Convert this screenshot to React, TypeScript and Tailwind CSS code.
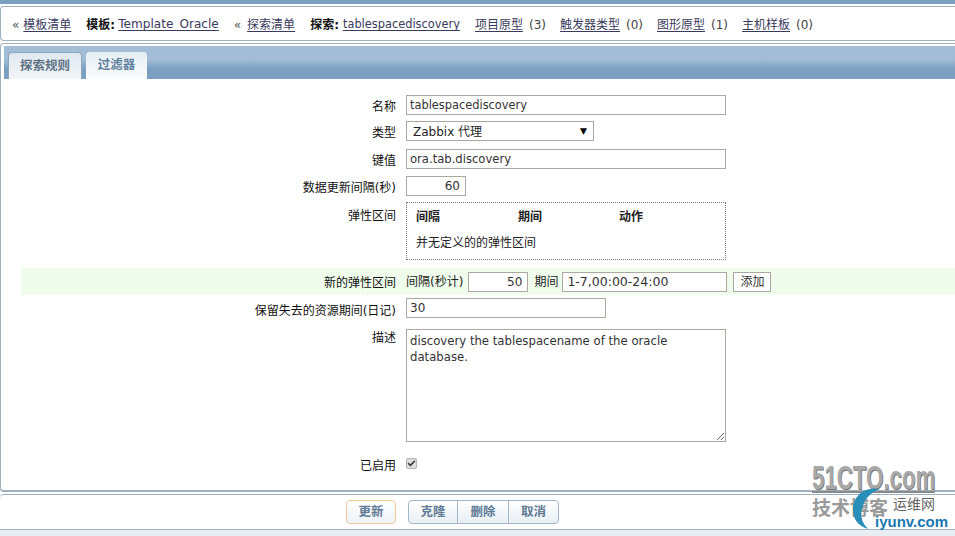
import { Check } from "lucide-react";

const font = "[font-family:'DejaVu_Sans','Noto_Sans_CJK_SC',sans-serif]";
const fieldBorder = "border border-[#aaa89f] bg-white";

function Crumb({ children }: { children: React.ReactNode }) {
  return <a className="text-[#3a3a5c] underline underline-offset-2">{children}</a>;
}

function Count({ children }: { children: React.ReactNode }) {
  return <span className="ml-[6px] text-[#444]">{children}</span>;
}

function Row({
  label,
  className,
  labelClass,
  children,
}: {
  label: string;
  className?: string;
  labelClass?: string;
  children: React.ReactNode;
}) {
  return (
    <div className={"flex " + (className ?? "")}>
      <div className={"w-[395px] shrink-0 text-right text-[12px] leading-[16px] text-[#111] " + (labelClass ?? "")}>
        {label}
      </div>
      <div className="ml-[10px] flex-1">{children}</div>
    </div>
  );
}

export default function App() {
  return (
    <div className={"relative flex h-[536px] w-[955px] flex-col overflow-hidden bg-white text-[12px] " + font}>
      <div className="h-1 bg-[#7a9fc1]" />

      {/* breadcrumb bar */}
      <div className="mt-[2px] flex h-[35px] items-center rounded-l border border-r-0 border-[#9fb0bf] pl-[11px] pt-[2px] text-[#444]">
        <span className="text-[#555]">«</span>
        <span className="ml-[4px]"><Crumb>模板清单</Crumb></span>
        <b className="ml-[15px] text-[#111]">模板:</b>
        <span className="ml-[3px] text-[12.1px]"><Crumb>Template_Oracle</Crumb></span>
        <span className="ml-[15px] text-[#555]">«</span>
        <span className="ml-[6px]"><Crumb>探索清单</Crumb></span>
        <b className="ml-[15px] text-[#111]">探索:</b>
        <span className="ml-[4px] text-[11.4px]"><Crumb>tablespacediscovery</Crumb></span>
        <span className="ml-[15px]"><Crumb>项目原型</Crumb><Count>(3)</Count></span>
        <span className="ml-[14px]"><Crumb>触发器类型</Crumb><Count>(0)</Count></span>
        <span className="ml-[14px]"><Crumb>图形原型</Crumb><Count>(1)</Count></span>
        <span className="ml-[14px]"><Crumb>主机样板</Crumb><Count>(0)</Count></span>
      </div>

      {/* main panel */}
      <div className="mt-[2px] flex h-[449px] flex-col rounded-l border border-r-0 border-b-2 border-[#9fb0bf] pl-[3px] pt-[2px]">
        <div className="flex h-[33px] items-end gap-[4px] bg-[linear-gradient(#a4bdd6_0%,#a4bdd6_40%,#7a9fc1_70%,#7a9fc1_100%)] pl-[4px]">
          <div className="flex h-[27px] w-[74px] items-center justify-center rounded-t-sm border border-b-0 border-[#8fa6bb] bg-[linear-gradient(#dfe8f1,#f3f6fa)] text-[12.5px] font-bold text-[#5f7387]">
            探索规则
          </div>
          <div className="flex h-[27px] w-[61px] items-center justify-center rounded-t-sm bg-[linear-gradient(#e6eef5,#fafcfd)] text-[12.5px] font-bold text-[#5f7f9c]">
            过滤器
          </div>
        </div>

        {/* form */}
        <div className="-ml-[3px] flex flex-1 flex-col pt-[16px]">
          <Row label="名称" labelClass="pt-[4px]">
            <input
              readOnly
              value="tablespacediscovery"
              className={"block h-[20px] w-[320px] px-[3px] text-[11.4px] text-[#333] " + fieldBorder}
            />
          </Row>
          <Row label="类型" className="mt-[6px]" labelClass="pt-[4px]">
            <div className={"flex h-[20px] w-[188px] items-center justify-between pl-[6px] pr-[6px] pt-[1px] text-[#222] " + fieldBorder}>
              <span>Zabbix 代理</span>
              <span className="text-[9px] text-black">▼</span>
            </div>
          </Row>
          <Row label="键值" className="mt-[8px]" labelClass="pt-[4px]">
            <input
              readOnly
              value="ora.tab.discovery"
              className={"block h-[20px] w-[320px] px-[3px] text-[11.6px] text-[#333] " + fieldBorder}
            />
          </Row>
          <Row label="数据更新间隔(秒)" className="mt-[7px]" labelClass="pt-[4px]">
            <input
              readOnly
              value="60"
              className={"block h-[20px] w-[60px] px-[5px] text-right text-[12px] text-[#333] " + fieldBorder}
            />
          </Row>
          <Row label="弹性区间" className="mt-[6px]" labelClass="pt-[6px]">
            <div className="flex h-[58px] w-[320px] flex-col border border-dotted border-[#777] pl-[9px] pt-[6px] leading-[16px]">
              <div className="flex font-bold text-[#222]">
                <span className="w-[102px]">间隔</span>
                <span className="w-[101px]">期间</span>
                <span>动作</span>
              </div>
              <div className="mt-[10px] text-[#222]">并无定义的的弹性区间</div>
            </div>
          </Row>
          <div className="ml-[20px] mt-[8px] flex h-[27px] items-center bg-[#f0fdec]">
            <div className="w-[375px] shrink-0 pt-[2px] text-right leading-[16px] text-[#111]">新的弹性区间</div>
            <div className="ml-[10px] flex items-center leading-[16px] text-[#222]">
              <span>间隔(秒计)</span>
              <input
                readOnly
                value="50"
                className={"ml-[5px] block h-[20px] w-[60px] px-[5px] text-right text-[12px] text-[#333] " + fieldBorder}
              />
              <span className="ml-[6px]">期间</span>
              <input
                readOnly
                value="1-7,00:00-24:00"
                className={"ml-[4px] block h-[20px] w-[165px] px-[4px] text-[12.5px] text-[#333] " + fieldBorder}
              />
              <div className={"ml-[6px] flex h-[20px] w-[38px] items-center justify-center text-[#333] " + fieldBorder}>添加</div>
            </div>
          </div>
          <Row label="保留失去的资源期间(日记)" className="mt-[3px]" labelClass="pt-[5px]">
            <input
              readOnly
              value="30"
              className={"block h-[20px] w-[200px] px-[3px] text-[12px] text-[#333] " + fieldBorder}
            />
          </Row>
          <Row label="描述" className="mt-[10px]" labelClass="pt-[1px]">
            <textarea
              readOnly
              value="discovery the tablespacename of the oracle database."
              className={"block h-[113px] w-[320px] px-[3px] py-[3px] text-[11.7px] leading-[16px] text-[#333] " + fieldBorder}
            />
          </Row>
          <Row label="已启用" className="mt-[16px]">
            <div className="flex h-[11px] w-[11px] items-center justify-center rounded-[2px] border border-[#b4b4b4] bg-[#dcdcdc]">
              <Check size={9} strokeWidth={4} className="text-[#333]" />
            </div>
          </Row>
        </div>
      </div>

      {/* footer buttons */}
      <div className="mt-[2px] flex h-[35px] items-center rounded-l border-t border-[#9fb0bf] pl-[346px] text-[12.5px] font-bold">
        <div className="flex h-[24px] w-[50px] items-center justify-center rounded-sm border border-[#f0c89a] bg-[linear-gradient(#ffffff,#edf3f8)] text-[#5f7a94]">
          更新
        </div>
        <div className="ml-[12px] flex h-[24px] overflow-hidden rounded-sm border border-[#a3b6c8] bg-[linear-gradient(#ffffff,#e8eff5)] text-[#5f7a94]">
          <div className="flex w-[49px] items-center justify-center border-r border-[#a3b6c8]">克隆</div>
          <div className="flex w-[51px] items-center justify-center border-r border-[#a3b6c8]">删除</div>
          <div className="flex w-[49px] items-center justify-center">取消</div>
        </div>
      </div>
      <div className="flex-1 border-t border-[#9fb0bf] bg-[#e9eef2]" />

      {/* 51CTO / iyunv watermark */}
      <div className="pointer-events-none absolute left-[812px] top-[464px] h-[72px] w-[143px]">
        <div className="absolute left-0 top-[-4px] origin-left scale-x-[0.655] whitespace-nowrap font-['Liberation_Sans',sans-serif] text-[34px] font-bold leading-none text-[#a8a8a8] [text-shadow:1px_1px_0_#777]">
          51CTO.com
        </div>
        <div className="absolute left-0 top-[27px] h-[2px] w-[123px] bg-[#8a8a8a]" />
        <div className="absolute left-0 top-[35px] whitespace-nowrap text-[19px] font-bold leading-none text-[#999]">技术博客</div>
        <div className="absolute left-[81px] top-[33px] whitespace-nowrap text-[14px] leading-none text-[#666]">运维网</div>
        <svg className="absolute left-[38px] top-[22px]" width="40" height="46" viewBox="0 0 40 46">
          <path d="M30 3 C14 0 3 10 3 24 C3 33 8 40 18 43 C12 37 10 30 12 23 C14 13 21 6 30 3 Z" fill="#2a8fb8" />
        </svg>
        <div className="absolute left-[63px] top-[50px] whitespace-nowrap font-['Liberation_Sans',sans-serif] text-[15px] font-bold leading-none text-[#1877b0]">
          iyunv.com
        </div>
      </div>
    </div>
  );
}
